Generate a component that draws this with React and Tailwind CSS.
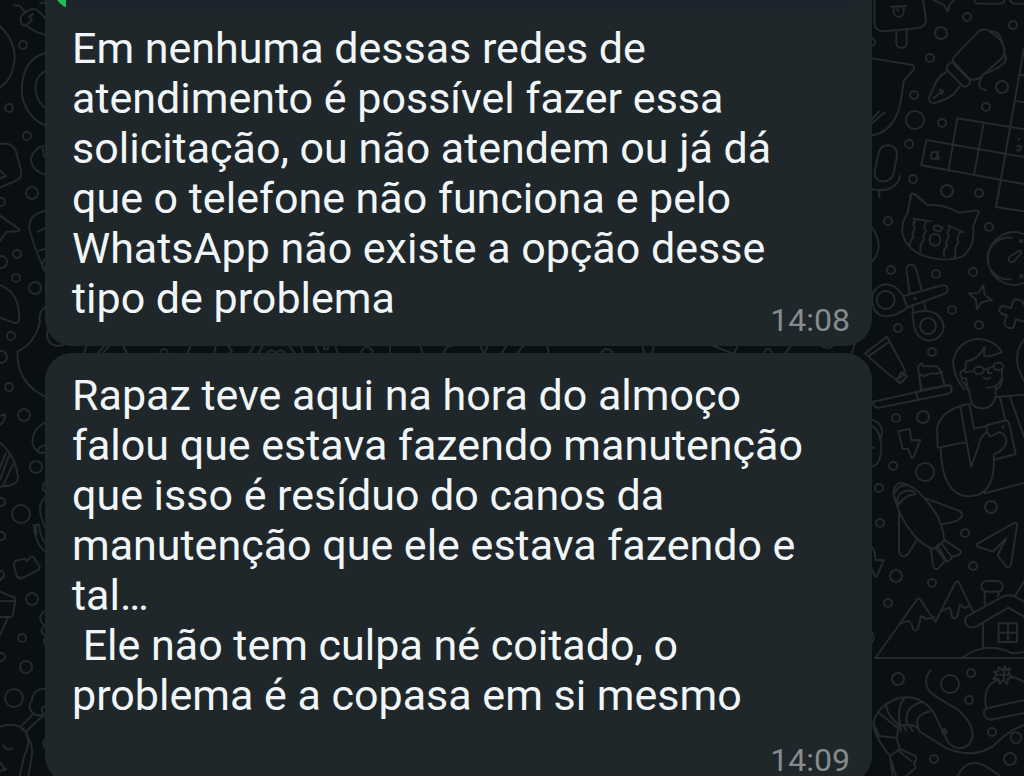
const messages = [
  {
    id: 1,
    quoted: true,
    text: "Em nenhuma dessas redes de atendimento é possível fazer essa solicitação, ou não atendem ou já dá que o telefone não funciona e pelo WhatsApp não existe a opção desse tipo de problema",
    time: "14:08",
  },
  {
    id: 2,
    quoted: false,
    text: "Rapaz teve aqui na hora do almoço falou que estava fazendo manutenção que isso é resíduo do canos da manutenção que ele estava fazendo e tal…\n Ele não tem culpa né coitado, o problema é a copasa em si mesmo",
    time: "14:09",
  },
]

// Small bubbles scattered between the doodles: [x, y, radius]
const dots = [
  [967, 17, 4], [941, 33, 6], [1013, 25, 4], [930, 58, 4], [914, 95, 4], [1002, 87, 6],
  [986, 107, 4], [915, 120, 9], [942, 123, 4], [909, 144, 4], [913, 179, 4], [947, 191, 6],
  [979, 193, 4], [888, 221, 4], [989, 227, 4], [891, 270, 4], [936, 274, 4], [973, 272, 4],
  [952, 310, 4], [898, 328, 4], [979, 325, 4], [932, 352, 4], [896, 418, 4], [923, 417, 6],
  [893, 466, 4], [925, 472, 9], [879, 488, 4], [880, 523, 4], [991, 507, 6], [965, 533, 4],
  [973, 566, 4], [896, 576, 6], [932, 583, 4], [888, 603, 4], [898, 679, 6], [971, 673, 4],
  [950, 684, 9], [969, 700, 4], [992, 732, 4], [934, 759, 4], [1010, 759, 6], [871, 42, 4],
  [23, 45, 4], [9, 108, 4], [27, 136, 4], [32, 193, 6], [1, 202, 4], [17, 254, 4],
  [16, 278, 4], [1, 262, 6], [35, 288, 6], [11, 336, 4], [1, 357, 6], [9, 387, 4],
  [24, 415, 6], [36, 467, 6], [1, 502, 4], [21, 514, 9], [1, 536, 4], [0, 575, 4],
  [32, 599, 6], [22, 638, 4], [1, 657, 4], [26, 667, 6], [14, 698, 9], [58, 335, 11],
]

const Wallpaper = () => (
  <svg
    aria-hidden="true"
    className="absolute left-0 top-0 h-[776px] w-[1024px] text-[#23292d]"
    viewBox="0 0 1024 776"
    fill="none"
    stroke="currentColor"
    strokeWidth="2"
    strokeLinecap="round"
    strokeLinejoin="round"
  >
    {dots.map(([x, y, r]) => (
      <circle key={`${x}-${y}`} cx={x} cy={y} r={r} />
    ))}

    {/* Popsicle, fountain pen, jug, crossword, microphone */}
    <g transform="translate(864 0) scale(.3333)" strokeWidth="6">
      <path d="M31 0V70Q34 94 60 94L158 85Q185 82 186 60L177 0M80 20L128 18M89 21V36A15 15 0 0 0 119 34V20M101 21V34M97 94V132A16 16 0 0 0 128 130V91" />
      <path d="M208 0L239 14L252 34L256 15L269 0M331 0Q333 11 345 11H410Q420 11 421 0M438 0Q442 11 454 11H480" />
      <path d="M269 172L343 95Q356 84 374 92L400 111Q416 124 421 149Q423 166 412 176L350 231Q333 244 314 236L276 200Q262 184 269 172Z" />
      <path d="M380 94Q406 93 414 125M421 161Q431 174 422 187Q405 206 358 223M354 230Q339 250 351 266L366 271" />
      <path d="M252 194Q264 180 276 193L315 235Q323 247 310 257Q301 263 293 255L250 211Q245 202 252 194ZM247 216Q220 229 209 263L195 293Q193 310 211 309Q248 300 270 281L287 260M208 295L235 273M226 269L237 273L234 282" />
      <path d="M24 175L145 195Q155 199 148 210L119 242Q112 309 101 339Q75 399 24 406M24 357L45 335M24 370L62 337" />
      <path d="M45 455Q52 435 75 436Q100 441 99 466L89 520Q79 547 51 544Q29 538 32 514ZM24 568Q96 580 108 528M46 570V591" />
      <path d="M280 355L480 388M187 420L480 471M172 496L480 552M280 355L253 513M187 420L172 496M359 370L330 524M480 145L400 600M469 225H480M455 303L480 307" />
      <path d="M221 458Q206 451 200 465Q201 481 216 476L223 454L219 475Q223 480 227 472M463 418H467M460 438H471L470 446Q468 456 458 450" />
      <path d="M140 600V586Q145 578 155 585L177 600" />
    </g>

    {/* Crying cat, stopwatch, scissors, sparkle */}
    <g transform="translate(864 190) scale(.3333)" strokeWidth="6">
      <path d="M45 0V20M230 0Q233 20 250 21Q266 18 268 0M405 0L396 51L480 64" />
      <path d="M140 14Q144 7 151 13L190 45Q244 42 285 68L341 61Q348 64 342 72L327 111Q335 165 299 197Q252 221 177 196Q127 177 116 132Q110 100 131 70Z" />
      <path d="M148 86L200 94M253 107L299 127M157 88Q142 102 153 116Q142 130 148 142Q138 151 138 165M188 94Q175 110 186 123Q175 137 179 151Q165 166 170 185M260 111Q246 125 255 140Q242 156 249 169Q235 180 241 199M290 125Q276 142 283 158Q270 171 275 184L272 202" />
      <path d="M209 108Q220 104 235 112Q234 125 219 124Q208 120 209 108Z" />
      <ellipse cx="213" cy="149" rx="16" ry="18" />
      <path d="M24 113Q64 170 24 215" />
      <path d="M480 132A79 79 0 1 0 480 279M443 143A63 63 0 1 0 441 268M465 182Q474 180 470 191L450 214Q438 221 434 210Q432 202 440 198Z" />
      <circle cx="471" cy="153" r="4" />
      <circle cx="472" cy="259" r="4" />
      <path d="M127 237Q128 224 142 224Q154 226 156 237L173 299M127 237L137 310M118 319L234 286Q252 285 251 300Q249 309 239 312L130 353M118 319Q98 282 62 283Q23 293 24 331Q28 378 68 379Q100 377 130 353M118 319L130 353M145 345L148 369M181 338L185 361M145 370Q187 356 216 371Q244 393 238 422Q222 455 187 451Q156 443 150 407Z" />
      <circle cx="65" cy="330" r="27" />
      <circle cx="192" cy="408" r="24" />
      <circle cx="153" cy="326" r="2" />
      <path d="M358 286L362 315L384 330L353 337L339 357L335 327L313 310L342 309Z" />
      <path d="M480 345L475 333L456 327Q447 328 447 337L441 354L416 347Q405 351 406 363Q407 371 428 376L421 399Q422 412 438 415L448 413L456 388L480 395" />
      <path d="M3 490L69 440L121 536Q126 554 103 565L94 566Q84 564 3 490ZM13 499L78 454M101 566L112 547L130 559L108 579L94 567" />
      <path d="M171 597L166 559L162 531L173 519L177 529L220 528L232 548L241 587M166 552Q178 563 190 554Q207 547 218 552L234 545M170 600L258 585L263 600" />
      <path d="M300 597Q269 560 267 515Q279 453 341 446Q395 450 413 487L378 499L360 497L362 471Q344 508 306 514L304 540Q286 541 290 558Q293 568 307 565L310 600M304 547L331 543M359 539L390 530M414 536V574Q410 592 395 600M372 537V549H382M359 564Q368 570 379 563M480 448Q438 503 480 572" />
      <ellipse cx="345" cy="541" rx="15" ry="11" />
      <ellipse cx="403" cy="529" rx="15" ry="11" />
    </g>

    {/* Cake, reader with phone, bolt, shuttle, paper plane */}
    <g transform="translate(864 380) scale(.3333)" strokeWidth="6">
      <path d="M28 65L249 16Q263 13 263 26Q263 39 250 42L46 83Q27 83 27 66M155 36L162 59M168 0L173 27M238 0L241 14M98 0L108 10L120 0" />
      <path d="M292 0L315 29L320 58Q322 80 346 84Q385 90 395 50V20M368 23Q401 25 410 0M311 72Q229 90 219 146L221 203L304 187M289 81L321 260L343 201Q348 171 368 155M316 72L330 146L368 139M397 51L480 44M408 52L424 119M438 52L480 170M230 203Q234 350 318 349Q397 345 389 224Q430 204 427 181Q423 159 405 157L379 170Q367 160 368 136L422 122Q434 120 436 132L455 222L389 239M362 340L480 309" />
      <circle cx="417" cy="141" r="2" />
      <path d="M103 154L136 146L143 181L169 180L148 233Q144 238 141 229L132 207L116 206Z" />
      <path d="M24 120Q49 124 55 155L49 182M24 138Q49 151 52 202Q50 257 24 258M24 203H31M24 502L31 511L35 541L60 540L39 587Q35 595 31 584L24 568" />
      <path d="M105 309Q83 319 91 352Q107 409 137 449Q164 489 205 507Q226 501 241 479Q237 443 222 412Q199 370 164 336Q132 309 105 309ZM105 374Q96 356 104 347Q116 328 146 332L154 343Q121 345 105 374M94 337Q103 314 128 316M180 353L285 392Q297 399 293 411Q287 419 274 424L233 434M105 390V515Q109 530 122 529L132 522L160 477M201 507L207 557Q210 570 223 566L239 546M220 496Q230 487 236 495L263 531Q260 543 248 544ZM220 496Q213 507 224 515L248 547M242 481L289 511Q293 520 282 525L262 531" />
      <path d="M341 491L448 430Q461 425 459 438L441 554Q434 567 425 558L401 526L428 473L387 515L344 501Q334 496 341 491Z" />
    </g>

    {/* Mountains, house, shrimp, beanie */}
    <g transform="translate(864 576) scale(.3333)" strokeWidth="6">
      <path d="M34 246L159 71Q164 64 169 71L214 138L274 20Q280 12 285 20L327 106M32 246H480M110 143L133 134L143 145L148 160Q155 168 162 157L171 120L188 129L211 123M235 104L258 95L264 122Q273 134 280 119L288 86L302 96L319 89" />
      <path d="M352 31Q353 15 370 15H400Q416 18 416 31Q415 46 400 47H370Q354 46 352 31ZM362 49V84M406 48L402 61M310 121L413 63Q435 53 456 63L480 77M480 122L433 95L337 151Q317 160 307 146Q298 129 310 121M357 142V214M404 142H459V198H404ZM432 142V198M404 170H459M296 244Q368 193 445 232L480 228M455 56L480 17" />
      <path d="M200 283Q174 311 196 345Q213 363 282 401Q326 438 326 479Q320 515 288 517Q263 516 249 492L209 409Q168 353 105 366Q38 389 28 442Q29 478 77 539L96 600M78 541L107 519Q103 501 97 486Q102 473 103 449Q126 443 162 453L167 467L235 509Q254 522 284 528Q341 542 389 509Q430 466 480 446M28 440L45 480L97 485M43 409Q65 427 97 453M65 383Q69 422 108 449M124 364Q97 391 108 446M173 378Q119 393 129 443M204 405Q148 415 162 453M78 541L86 600M110 520L154 540Q163 551 149 560L155 575L127 600M105 526L142 555M106 448L112 465M119 448L127 465M134 446L146 465M145 446L159 456M24 170Q34 185 24 199" />
      <circle cx="241" cy="467" r="7" fill="currentColor" />
      <circle cx="456" cy="485" r="16" />
      <path d="M281 600Q300 559 335 561Q358 562 408 600M480 373L371 396Q359 401 360 412Q363 430 380 431L480 411M366 396Q355 329 399 313M438 302Q465 306 480 318M415 283L404 274L403 286L390 287L399 297L388 309L404 309L407 323L417 313L430 324L431 310L445 302L434 293L437 277L425 283L424 270Z" />
      <path d="M420 286V309M406 296H432" />
    </g>

    {/* Left edge */}
    <g transform="scale(.3333)" strokeWidth="6">
      <path d="M0 79Q44 120 44 172Q40 236 0 263M42 16L59 17L77 37Q97 20 114 32L143 61M75 37Q57 49 63 65Q66 78 78 76L96 61L87 51L99 42M78 76Q106 100 145 106M120 8L136 10V0M145 157Q60 174 66 285Q78 354 145 381M145 211Q106 222 106 269Q112 313 145 329M145 435Q99 440 93 480Q98 518 145 525M129 447L132 469L145 480M0 432Q41 425 50 461L64 515Q65 535 48 542L0 563M0 512L18 529L0 535" />
    </g>
    <g transform="translate(0 190) scale(.3333)" strokeWidth="6">
      <path d="M0 77L57 117Q61 123 50 124L19 126L0 153M145 60Q83 71 88 117Q108 193 145 261M114 125L145 109M117 182L145 174M145 197Q117 216 133 241M0 285Q58 307 58 386Q57 400 44 399L0 383M145 347Q112 360 120 397Q101 465 53 484Q48 552 101 600M260 466L252 490" />
    </g>
    <g transform="translate(0 380) scale(.3333)" strokeWidth="6">
      <path d="M76 0Q92 31 145 54M0 107L15 103Q16 124 0 134M145 123Q93 145 98 193Q111 227 145 216M115 218Q110 195 145 197M0 188Q45 225 54 289Q57 317 0 320M18 219L0 263M27 228L0 299M38 253L10 317M145 304Q125 307 129 329L145 339M145 345Q119 359 120 392Q127 439 145 455M101 436L117 434Q120 475 145 502M101 436Q108 502 145 521M107 438L110 462M41 554Q44 541 55 541L74 536L80 543L93 530Q102 527 106 541L119 560Q120 570 109 573L64 596Q54 599 50 586Z" />
    </g>
    <g transform="translate(0 576) scale(.3333)" strokeWidth="6">
      <path d="M0 47L42 64Q48 67 46 75L39 116Q37 124 27 123H0M0 75L44 76M24 125L0 177M145 103Q119 107 121 130Q124 145 137 147Q121 156 126 170L137 180Q126 196 138 213M145 338Q98 336 96 374Q82 389 94 405Q106 421 125 417L145 430M145 391Q123 391 125 404Q127 417 145 415M62 452L101 413M80 464L127 421M62 452L68 463L80 464M0 452Q50 436 77 467Q95 492 72 542L59 600M79 479Q103 507 94 548L85 600M11 508Q20 527 36 517M0 559L10 574L14 583M0 585L19 578M145 486Q122 493 134 516M50 0Q61 9 75 2M0 14L12 0" />
    </g>

    {/* Pieces showing in the gap between two messages */}
    <path d="M97 354L105 345M102 354L110 345M123 345L127 354M160 354A4 5 0 0 1 168 354M187 354L191 345M216 345L214 354M227 345L232 351L229 354M249 354L254 345M258 354L263 345M266 354Q271 347 276 353Q281 347 286 354M289 345L295 354M301 345L303 354M315 345L319 354M324 345V349H328V345M335 345L338 354M361 354A6 7 0 0 1 373 354M390 345V354M420 345L423 354M443 354L447 347L455 345M480 345L484 354L488 345M501 354L507 345M517 354L523 346L519 345M547 345L549 354M600 354Q607 344 614 354M643 345Q642 352 647 354M653 345Q655 350 650 354M711 345L734 354L738 345M764 354A4 5 0 0 1 772 354M785 354L791 345M821 345Q827 351 834 345M851 356L855 343" />
  </svg>
)

const Message = ({ message }) => (
  <article
    className={`flex flex-col overflow-hidden rounded-[27px] bg-[#20272a] pl-[27px] pr-[22px] ${
      message.quoted ? "rounded-t-none pb-[11px]" : "pb-2 pt-[17px]"
    }`}
  >
    {/* Bottom edge of the quoted message */}
    {message.quoted && (
      <div className="-ml-[18px] -mr-3 -mt-[31px] mb-3.5 flex h-10 overflow-hidden rounded-[20px] bg-[#1d242d]">
        <div className="w-3 bg-[#25b85a]" />
      </div>
    )}
    <p className="whitespace-pre-wrap pr-8 text-[43px] leading-[50px] text-[#f0f6f8]">{message.text}</p>
    <time
      className={`self-end text-[32px] leading-[30px] text-[#858b8e] ${message.quoted ? "-mt-[18px]" : "mt-[25px]"}`}
    >
      {message.time}
    </time>
  </article>
)

const App = () => {
  return (
    <main className="relative h-screen overflow-hidden bg-[#0a0f13] font-[Roboto,sans-serif]">
      <Wallpaper />
      <div className="relative ml-[45px] mr-[152px] flex flex-col gap-[7px]">
        {messages.map((message) => (
          <Message key={message.id} message={message} />
        ))}
      </div>
    </main>
  )
}

export default App
